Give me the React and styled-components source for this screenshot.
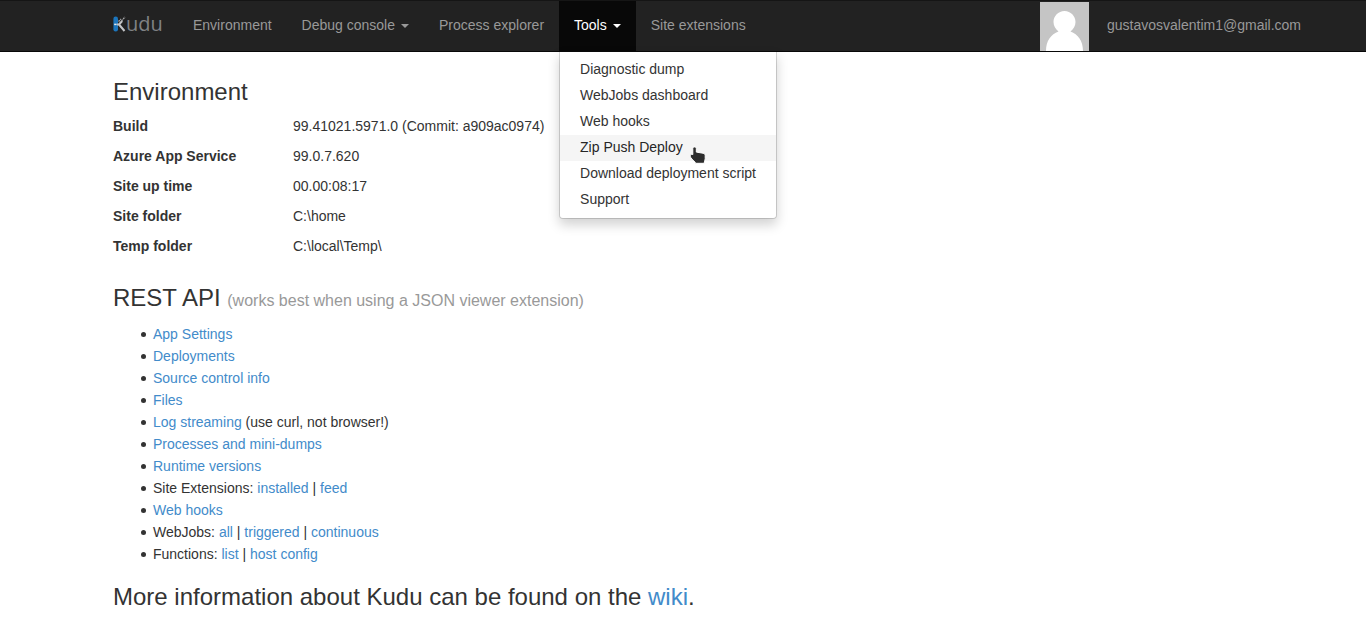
import React from "react";
import styled, { createGlobalStyle, css } from "styled-components";

const GlobalStyle = createGlobalStyle`
  *, *::before, *::after { box-sizing: border-box; }
  body {
    margin: 0;
    background: #fff;
    color: #333;
    font-family: "Liberation Sans", Arial, sans-serif;
    font-size: 14px;
    line-height: 20px;
  }
`;

const Navbar = styled.header`
  position: relative;
  z-index: 10;
  background: #222;
  border-top: 1px solid #151515;
  border-bottom: 1px solid #080808;
`;

const NavInner = styled.nav`
  display: flex;
  align-items: stretch;
  max-width: 1140px;
  height: 50px;
  margin: 0 auto;
`;

const Brand = styled.a`
  display: flex;
  align-items: center;
  width: 65px;
  padding-bottom: 4px;
  color: #808285;
  font-family: "Open Sans", sans-serif;
  font-size: 20px;
  font-weight: 400;
  line-height: 20px;
  text-decoration: none;
`;

const BrandMark = styled.svg`
  flex: none;
  width: 13px;
  height: 16px;
`;

const NavList = styled.ul`
  display: flex;
  margin: 0;
  padding: 0;
  list-style: none;
`;

const NavItem = styled.li`
  position: relative;
`;

const navEntry = css`
  display: flex;
  align-items: center;
  gap: 6px;
  height: 50px;
  padding: 0 15px 2px;
  border: 0;
  background: ${(p) => (p.$open ? "#080808" : "transparent")};
  color: ${(p) => (p.$open ? "#fff" : "#999")};
  font: inherit;
  text-decoration: none;
  white-space: nowrap;
  cursor: pointer;
`;

const NavLink = styled.a`
  ${navEntry}
`;

const NavToggle = styled.button`
  ${navEntry}
`;

const Caret = styled.span`
  margin-top: 2px;
  border-top: 4px solid currentColor;
  border-left: 4px solid transparent;
  border-right: 4px solid transparent;
`;

const Menu = styled.ul`
  position: absolute;
  top: 100%;
  left: 0;
  margin: 0;
  padding: 5px 0;
  list-style: none;
  background: #fff;
  background-clip: padding-box;
  border: 1px solid rgba(0, 0, 0, 0.15);
  border-top: 1px solid #080808;
  border-radius: 0 0 4px 4px;
  box-shadow: 0 6px 12px rgba(0, 0, 0, 0.175);
`;

const MenuItem = styled.li`
  position: relative;
`;

const MenuLink = styled.a`
  display: block;
  padding: 2px 20px 4px;
  background: ${(p) => (p.$hovered ? "#f5f5f5" : "transparent")};
  color: ${(p) => (p.$hovered ? "#262626" : "#333")};
  text-decoration: none;
  white-space: nowrap;
`;

const Pointer = styled.svg`
  position: absolute;
  top: 11px;
  left: 129px;
  width: 18px;
  height: 20px;
  pointer-events: none;
`;

const Account = styled.div`
  display: flex;
  align-items: center;
  gap: 18px;
  margin-left: auto;
  margin-right: -48px;
`;

const Avatar = styled.svg`
  flex: none;
  align-self: flex-end;
  width: 49px;
  height: 49px;
`;

const AccountLink = styled.a`
  padding-bottom: 2px;
  color: #999;
  text-decoration: none;
`;

const Page = styled.main`
  max-width: 1140px;
  margin: 0 auto;
  padding-top: 26px;
`;

const Heading = styled.h3`
  margin: 0;
  padding-bottom: 10px;
  color: #333;
  font-size: 24px;
  font-weight: 400;
  line-height: 28px;
`;

const Note = styled.small`
  color: #999;
  font-size: 16px;
  line-height: 16px;
`;

const Facts = styled.table`
  margin-bottom: 18px;
  border-collapse: collapse;
`;

const FactName = styled.th`
  width: 180px;
  padding: 0 0 10px;
  text-align: left;
  font-weight: 700;
`;

const FactValue = styled.td`
  padding: 0 0 10px;
`;

const ApiList = styled.ul`
  margin: 0;
  padding: 1px 0 18px 40px;
  list-style: none;
  line-height: 22px;
`;

const ApiItem = styled.li`
  &::before {
    content: "";
    display: inline-block;
    width: 5px;
    height: 5px;
    margin: 0 7px 2px -12px;
    border-radius: 50%;
    background: #333;
  }
`;

const Link = styled.a`
  color: #428bca;
  text-decoration: none;
`;

const facts = [
  ["Build", "99.41021.5971.0 (Commit: a909ac0974)"],
  ["Azure App Service", "99.0.7.620"],
  ["Site up time", "00.00:08:17"],
  ["Site folder", "C:\\home"],
  ["Temp folder", "C:\\local\\Temp\\"],
];

const tools = [
  "Diagnostic dump",
  "WebJobs dashboard",
  "Web hooks",
  "Zip Push Deploy",
  "Download deployment script",
  "Support",
];

const endpoints = [
  { links: ["App Settings"] },
  { links: ["Deployments"] },
  { links: ["Source control info"] },
  { links: ["Files"] },
  { links: ["Log streaming"], after: " (use curl, not browser!)" },
  { links: ["Processes and mini-dumps"] },
  { links: ["Runtime versions"] },
  { before: "Site Extensions: ", links: ["installed", "feed"] },
  { links: ["Web hooks"] },
  { before: "WebJobs: ", links: ["all", "triggered", "continuous"] },
  { before: "Functions: ", links: ["list", "host config"] },
];

function KuduMark() {
  return (
    <BrandMark viewBox="0 0 13 16" aria-hidden="true">
      <rect x="0.4" y="0.6" width="4.6" height="14.9" rx="2.2" fill="#1c75bc" />
      <path d="M1.2 8.4h2.4" stroke="#e6e7e8" strokeWidth="1.5" />
      <path d="M4 8.500h2l3.200-3.500M6 8.500l5.500 6.500" stroke="#c4c5c7" strokeWidth="2" fill="none" />
      <path d="M5.500 5.500l2.500-2.500M8.500 5l3.500-4" stroke="#a9aaac" strokeWidth="1.200" strokeDasharray="1.800 .7" />
    </BrandMark>
  );
}

function HandPointer() {
  return (
    <Pointer viewBox="0 0 18 20" aria-hidden="true">
      <path
        d="M3.800 2.600c0-2.200 3.500-2.200 3.500 0v3.500l6.700 1.100c1.500.3 2.200 1 2.200 2.500v3c0 2-.9 2.700-1.100 4.600H6.600c-.6-2.200-3.100-3.200-4.800-5.700-1.200-1.800 0-4 2-3z"
        fill="#2d2d2d"
        stroke="#fff"
        strokeWidth="1"
        strokeLinejoin="round"
      />
    </Pointer>
  );
}

function Silhouette() {
  return (
    <Avatar viewBox="0 0 49 49" role="img" aria-label="User avatar">
      <rect width="49" height="49" fill="#c5c5c5" />
      <path
        d="M24.500 9c6.200 0 11 5 11 11 0 4-2 7-5 9.500C38 32 43 39 43 49H6c0-10 5-17 12.500-19.500-3-2.500-5-5.500-5-9.500 0-6 4.800-11 11-11z"
        fill="#fff"
      />
    </Avatar>
  );
}

export default function App() {
  return (
    <>
      <GlobalStyle />
      <Navbar>
        <NavInner>
          <Brand href="#" aria-label="Kudu">
            <KuduMark />
            udu
          </Brand>
          <NavList>
            <NavItem><NavLink href="#">Environment</NavLink></NavItem>
            <NavItem><NavToggle type="button">Debug console<Caret /></NavToggle></NavItem>
            <NavItem><NavLink href="#">Process explorer</NavLink></NavItem>
            <NavItem>
              <NavToggle type="button" $open aria-expanded="true">Tools<Caret /></NavToggle>
              <Menu>
                {tools.map((name) => {
                  const hovered = name === "Zip Push Deploy";
                  return (
                    <MenuItem key={name}>
                      <MenuLink href="#" $hovered={hovered}>{name}</MenuLink>
                      {hovered && <HandPointer />}
                    </MenuItem>
                  );
                })}
              </Menu>
            </NavItem>
            <NavItem><NavLink href="#">Site extensions</NavLink></NavItem>
          </NavList>
          <Account>
            <Silhouette />
            <AccountLink href="#">gustavosvalentim1@gmail.com</AccountLink>
          </Account>
        </NavInner>
      </Navbar>
      <Page>
        <Heading>Environment</Heading>
        <Facts>
          <tbody>
            {facts.map(([name, value]) => (
              <tr key={name}>
                <FactName scope="row">{name}</FactName>
                <FactValue>{value}</FactValue>
              </tr>
            ))}
          </tbody>
        </Facts>
        <Heading>REST API <Note>(works best when using a JSON viewer extension)</Note></Heading>
        <ApiList>
          {endpoints.map(({ before, links, after }) => (
            <ApiItem key={(before || "") + links[0]}>
              {before}
              {links.map((label, i) => (
                <React.Fragment key={label}>
                  {i > 0 && " | "}
                  <Link href="#">{label}</Link>
                </React.Fragment>
              ))}
              {after}
            </ApiItem>
          ))}
        </ApiList>
        <Heading>More information about Kudu can be found on the <Link href="#">wiki</Link>.</Heading>
      </Page>
    </>
  );
}
